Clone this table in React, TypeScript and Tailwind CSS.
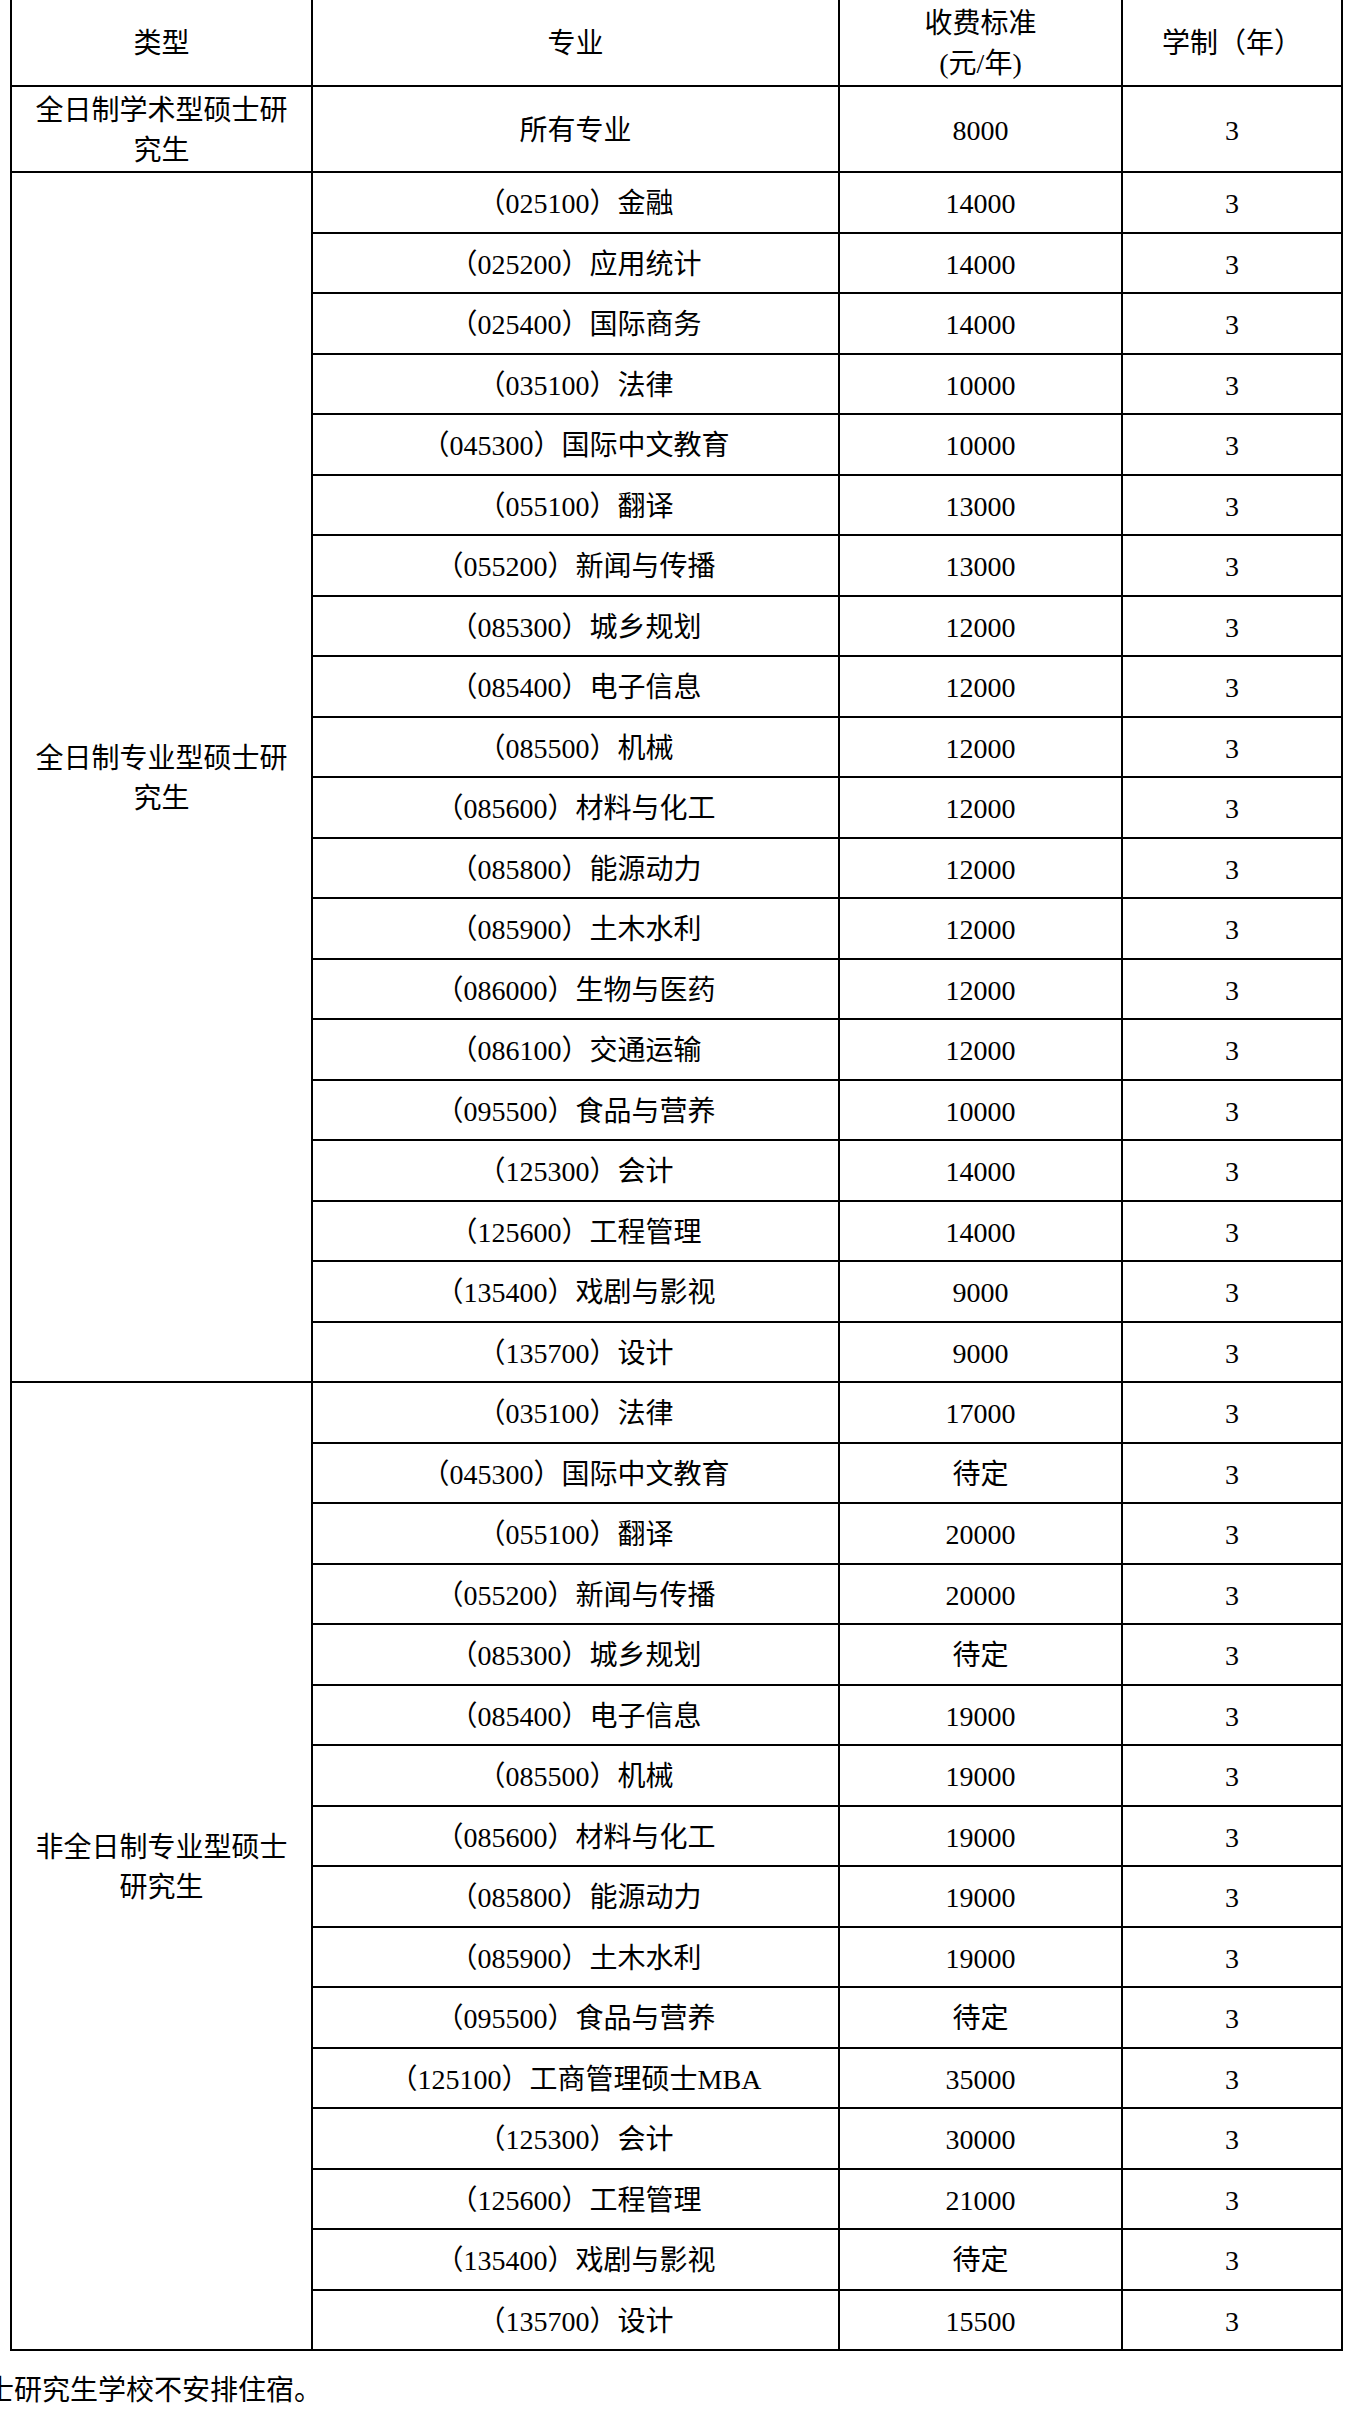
import React from "react";

const ft: [string, string][] = [
  ["（025100）金融", "14000"],
  ["（025200）应用统计", "14000"],
  ["（025400）国际商务", "14000"],
  ["（035100）法律", "10000"],
  ["（045300）国际中文教育", "10000"],
  ["（055100）翻译", "13000"],
  ["（055200）新闻与传播", "13000"],
  ["（085300）城乡规划", "12000"],
  ["（085400）电子信息", "12000"],
  ["（085500）机械", "12000"],
  ["（085600）材料与化工", "12000"],
  ["（085800）能源动力", "12000"],
  ["（085900）土木水利", "12000"],
  ["（086000）生物与医药", "12000"],
  ["（086100）交通运输", "12000"],
  ["（095500）食品与营养", "10000"],
  ["（125300）会计", "14000"],
  ["（125600）工程管理", "14000"],
  ["（135400）戏剧与影视", "9000"],
  ["（135700）设计", "9000"],
];

const pt: [string, string][] = [
  ["（035100）法律", "17000"],
  ["（045300）国际中文教育", "待定"],
  ["（055100）翻译", "20000"],
  ["（055200）新闻与传播", "20000"],
  ["（085300）城乡规划", "待定"],
  ["（085400）电子信息", "19000"],
  ["（085500）机械", "19000"],
  ["（085600）材料与化工", "19000"],
  ["（085800）能源动力", "19000"],
  ["（085900）土木水利", "19000"],
  ["（095500）食品与营养", "待定"],
  ["（125100）工商管理硕士MBA", "35000"],
  ["（125300）会计", "30000"],
  ["（125600）工程管理", "21000"],
  ["（135400）戏剧与影视", "待定"],
  ["（135700）设计", "15500"],
];

const cell = "border-2 border-black text-center align-middle px-0 pt-[4px] pb-0";

export default function App() {
  return (
    <div
      className="w-[1352px] h-[2426px] bg-white text-black overflow-hidden text-[28px] leading-[40px]"
      style={{ fontFamily: '"Liberation Serif", "Noto Sans CJK SC", serif' }}
    >
      <table className="table-fixed border-collapse ml-[10px] mt-[-3px] w-[1331px]">
        <colgroup>
          <col className="w-[301px]" />
          <col className="w-[527px]" />
          <col className="w-[283px]" />
          <col className="w-[220px]" />
        </colgroup>
        <tbody>
          <tr className="h-[88px]">
            <td className={cell}>类型</td>
            <td className={cell}>专业</td>
            <td className={cell}>
              收费标准
              <br />
              (元/年)
            </td>
            <td className={cell}>学制（年）</td>
          </tr>
          <tr className="h-[86px]">
            <td className={cell + " px-[14px]"}>全日制学术型硕士研究生</td>
            <td className={cell}>所有专业</td>
            <td className={cell}>8000</td>
            <td className={cell}>3</td>
          </tr>
          {ft.map(([m, f], i) => (
            <tr key={"ft" + i} className="h-[60.5px]">
              {i === 0 && (
                <td rowSpan={ft.length} className={cell + " px-[14px]"}>
                  全日制专业型硕士研究生
                </td>
              )}
              <td className={cell}>{m}</td>
              <td className={cell}>{f}</td>
              <td className={cell}>3</td>
            </tr>
          ))}
          {pt.map(([m, f], i) => (
            <tr key={"pt" + i} className="h-[60.5px]">
              {i === 0 && (
                <td rowSpan={pt.length} className={cell + " px-[14px]"}>
                  非全日制专业型硕士研究生
                </td>
              )}
              <td className={cell}>{m}</td>
              <td className={cell}>{f}</td>
              <td className={cell}>3</td>
            </tr>
          ))}
        </tbody>
      </table>
      <p className="ml-[-14px] mt-[20px] whitespace-nowrap">士研究生学校不安排住宿。</p>
    </div>
  );
}
